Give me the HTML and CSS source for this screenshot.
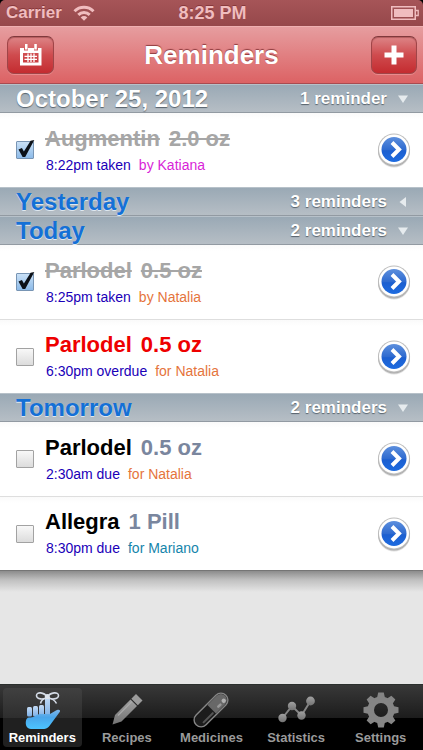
FILE: index.html
```html
<!DOCTYPE html>
<html lang="en">
<head>
<meta charset="utf-8">
<meta name="viewport" content="width=device-width, initial-scale=1">
<title>Reminders</title>
<link rel="stylesheet" href="styles.css">
</head>
<body>
<svg class="defs" aria-hidden="true">
  <defs>
    <linearGradient id="blue" x1="0" y1="0" x2="0" y2="1">
      <stop offset="0" stop-color="#5d8fdd"/><stop offset=".5" stop-color="#2f6bd0"/><stop offset=".55" stop-color="#1c5fd0"/><stop offset="1" stop-color="#1d6be0"/>
    </linearGradient>
    <linearGradient id="grey" x1="0" y1="0" x2="0" y2="1">
      <stop offset="0" stop-color="#a0a0a0"/><stop offset="1" stop-color="#737373"/>
    </linearGradient>
    <linearGradient id="palm" x1="0" y1="0" x2="0" y2="1">
      <stop offset="0" stop-color="#7fb5e8"/><stop offset=".4" stop-color="#4aa6ea"/><stop offset="1" stop-color="#4cc4ff"/>
    </linearGradient>
    <linearGradient id="finger" x1="0" y1="0" x2="0" y2="1">
      <stop offset="0" stop-color="#c3daf4"/><stop offset="1" stop-color="#7db0e6"/>
    </linearGradient>
  </defs>
  <symbol id="check" viewBox="0 0 20 20">
    <path d="M2.500 10.500l3.400-1.600 2 3.600L14.600 1.800 18.300 1 9.200 18 6.600 18z" fill="#0c1118"/>
  </symbol>
  <symbol id="disclose" viewBox="0 0 36 38">
    <ellipse cx="18" cy="20.500" rx="16" ry="16" fill="#000" opacity=".13"/>
    <circle cx="18" cy="19.500" r="16" fill="#000" opacity=".22"/>
    <circle cx="18" cy="18.500" r="16" fill="#bdbdbd"/>
    <circle cx="18" cy="18.500" r="15" fill="#fff"/>
    <circle cx="18" cy="18.500" r="12.500" fill="url(#blue)"/>
    <path d="M16 11.500l7 7-7 7" fill="none" stroke="#fff" stroke-width="4"/>
  </symbol>
</svg>

<header class="top">
  <div class="status">
    <div class="carrier">
      <span>Carrier</span>
      <svg width="22" height="16" viewBox="0 0 22 16" fill="none" stroke="#f0bdbf" stroke-width="3">
        <path d="M1.500 6.200a13.500 13.500 0 0 1 19 0"/>
        <path d="M5.300 9.900a8.200 8.200 0 0 1 11.400 0"/>
        <path d="M11 15.800L7.700 12.400a4.700 4.700 0 0 1 6.600 0z" fill="#f0bdbf" stroke="none"/>
      </svg>
    </div>
    <time>8:25 PM</time>
    <svg class="battery" width="28" height="14" viewBox="0 0 28 14" fill="none" stroke="#f0bdbf">
      <rect x=".75" y=".75" width="23.500" height="12.500" stroke-width="1.500"/>
      <rect x="3" y="3" width="19" height="8" fill="#f0bdbf" stroke="none"/>
      <path d="M24.500 4.500h2.700v5h-2.700" stroke-width="1.300"/>
    </svg>
  </div>
  <nav class="navbar">
    <button class="nav-button" type="button" aria-label="Calendar">
      <svg width="22" height="22" viewBox="0 0 22 22" fill="#fff">
        <path fill-rule="evenodd" d="M0 4h4v2.500h4V4h6v2.500h4V4h3.500v17.500H0zM3 9v9.500h15.500V9z"/>
        <rect x="5" y="0" width="2.500" height="5.500"/><rect x="14.300" y="0" width="2.500" height="5.500"/>
        <path d="M8 9.500v8.500M11 9.500v8.500M14 9.500v8.500M4.500 12.300h12.500M4.500 15.400h12.500" stroke="#fff" stroke-width="1.300"/>
      </svg>
    </button>
    <h1>Reminders</h1>
    <button class="nav-button add" type="button" aria-label="Add reminder">
      <svg width="20" height="20" viewBox="0 0 20 20"><path d="M10 .5v19M.5 10h19" stroke="#fff" stroke-width="5"/></svg>
    </button>
  </nav>
</header>

<main>
  <section>
    <header class="group past">
      <h2>October 25, 2012</h2><span class="count">1 reminder</span>
      <svg class="arrow" viewBox="0 0 10 10"><path d="M0 1.500h10L5 9z"/></svg>
    </header>
    <ul>
      <li class="row">
        <span class="tick"><input type="checkbox" id="r1" checked><svg><use href="#check"/></svg></span>
        <label class="info" for="r1">
          <span class="name done"><span>Augmentin</span><span>2.0 oz</span></span>
          <span class="meta"><span>8:22pm taken</span><span class="katiana">by Katiana</span></span>
        </label>
        <button class="more" type="button" aria-label="Details"><svg><use href="#disclose"/></svg></button>
      </li>
    </ul>
  </section>
  <section>
    <header class="group">
      <h2>Yesterday</h2><span class="count">3 reminders</span>
      <svg class="arrow" viewBox="0 0 10 10"><path d="M8 0v10L1.500 5z"/></svg>
    </header>
  </section>
  <section>
    <header class="group">
      <h2>Today</h2><span class="count">2 reminders</span>
      <svg class="arrow" viewBox="0 0 10 10"><path d="M0 1.500h10L5 9z"/></svg>
    </header>
    <ul>
      <li class="row">
        <span class="tick"><input type="checkbox" id="r2" checked><svg><use href="#check"/></svg></span>
        <label class="info" for="r2">
          <span class="name done"><span>Parlodel</span><span>0.5 oz</span></span>
          <span class="meta"><span>8:25pm taken</span><span class="natalia">by Natalia</span></span>
        </label>
        <button class="more" type="button" aria-label="Details"><svg><use href="#disclose"/></svg></button>
      </li>
      <li class="row">
        <span class="tick"><input type="checkbox" id="r3"></span>
        <label class="info" for="r3">
          <span class="name overdue"><span>Parlodel</span><span>0.5 oz</span></span>
          <span class="meta"><span>6:30pm overdue</span><span class="natalia">for Natalia</span></span>
        </label>
        <button class="more" type="button" aria-label="Details"><svg><use href="#disclose"/></svg></button>
      </li>
    </ul>
  </section>
  <section>
    <header class="group">
      <h2>Tomorrow</h2><span class="count">2 reminders</span>
      <svg class="arrow" viewBox="0 0 10 10"><path d="M0 1.500h10L5 9z"/></svg>
    </header>
    <ul>
      <li class="row">
        <span class="tick"><input type="checkbox" id="r4"></span>
        <label class="info" for="r4">
          <span class="name"><span>Parlodel</span><span class="dose">0.5 oz</span></span>
          <span class="meta"><span>2:30am due</span><span class="natalia">for Natalia</span></span>
        </label>
        <button class="more" type="button" aria-label="Details"><svg><use href="#disclose"/></svg></button>
      </li>
      <li class="row">
        <span class="tick"><input type="checkbox" id="r5"></span>
        <label class="info" for="r5">
          <span class="name"><span>Allegra</span><span class="dose">1 Pill</span></span>
          <span class="meta"><span>8:30pm due</span><span class="mariano">for Mariano</span></span>
        </label>
        <button class="more" type="button" aria-label="Details"><svg><use href="#disclose"/></svg></button>
      </li>
    </ul>
  </section>
  <div class="list-end"></div>
</main>

<nav class="tabs">
  <a class="tab active" href="#reminders">
    <svg viewBox="0 0 40 40">
      <g fill="url(#finger)">
        <rect x="5" y="17" width="5" height="9.500" rx="1.500"/>
        <rect x="11" y="16" width="5" height="10.500" rx="1.500"/>
        <rect x="17" y="15" width="5" height="11.500" rx="1.500"/>
        <path d="M23 7h5v20h-5z"/>
      </g>
      <path d="M4 30.500c.5-2.500 2-3 4.500-3 4.500 0 5.500-3.500 10-3.500H28c3-1.500 5-3.200 7-4 2.500-1 3.800.5 2.700 2L28.500 34.500C26 38 24.500 39 21 39H9c-4 0-6-4-5-8.500z" fill="url(#palm)"/>
      <g fill="none" stroke="#d4dbe6" stroke-width="1.600">
        <path d="M25.300 7C22 2 14.500 1.500 14.500 5.500 14.500 9.500 22 10 25.300 7 28.500 10 36.500 9.500 36.500 5.500 36.500 1.500 28.500 2 25.300 7z"/>
        <path d="M25 8c-3.500.5-6 3-6.500 5.500M26 8c4 .5 7 2.500 8.500 5.500"/>
      </g>
      <ellipse cx="25.300" cy="6.500" rx="2.500" ry="2.500" fill="#dce3ec"/>
    </svg>
    <span>Reminders</span>
  </a>
  <a class="tab" href="#recipes">
    <svg viewBox="0 0 40 40">
      <path d="M5.500 34.500l2.500-9.500L23.500 9.500l6.500 6.500L14.500 31.500z" fill="url(#grey)"/>
      <path d="M24.300 8.700l4.700-4.700 6.500 6.500-4.700 4.700z" fill="#9c9c9c"/>
      <path d="M11 25.500l14-14" stroke="#a8a8a8" stroke-width="1.200"/>
    </svg>
    <span>Recipes</span>
  </a>
  <a class="tab" href="#medicines">
    <svg viewBox="0 0 40 40">
      <g transform="rotate(45 20 20)">
        <rect x="13" y="-1" width="14" height="42" rx="7" fill="#1c1c1c" stroke="#858585" stroke-width="1.400"/>
        <path d="M14 19V6a6 6 0 0 1 12 0v13z" fill="#686868"/>
        <path d="M23.500 21v13" stroke="#555" stroke-width="2" stroke-linecap="round"/>
        <circle cx="22.500" cy="4.500" r="2.200" fill="#b0b0b0"/>
        <path d="M22.800 9.500v3" stroke="#999" stroke-width="2.500" stroke-linecap="round"/>
      </g>
    </svg>
    <span>Medicines</span>
  </a>
  <a class="tab" href="#statistics">
    <svg viewBox="0 0 40 40">
      <path d="M6.500 28l9.500-12 9.500 9.500L34.500 11" fill="none" stroke="#858585" stroke-width="2"/>
      <g fill="url(#grey)"><circle cx="6.500" cy="28" r="4.200"/><circle cx="16" cy="16" r="4.200"/><circle cx="25.500" cy="25.500" r="4.200"/><circle cx="34.500" cy="11" r="4.400"/></g>
    </svg>
    <span>Statistics</span>
  </a>
  <a class="tab" href="#settings">
    <svg viewBox="0 0 40 40">
      <circle cx="20" cy="20" r="10.300" fill="none" stroke="#858585" stroke-width="6.600"/>
      <g fill="#858585">
        <path id="cog" d="M16 8l1.200-5.500h5.600L24 8zM16 32l1.200 5.500h5.600L24 32z"/>
        <use href="#cog" transform="rotate(45 20 20)"/>
        <use href="#cog" transform="rotate(90 20 20)"/>
        <use href="#cog" transform="rotate(135 20 20)"/>
      </g>
    </svg>
    <span>Settings</span>
  </a>
</nav>
</body>
</html>
```

FILE: styles.css
```css
* {
  box-sizing: border-box;
}

body {
  margin: 0;
  min-height: 100vh;
  display: flex;
  flex-direction: column;
  background: #000;
  color: #000;
  font-family: "Liberation Sans", Arial, sans-serif;
}

h1,
h2,
ul {
  margin: 0;
  padding: 0;
}

ul {
  list-style: none;
}

button {
  padding: 0;
  border: 0;
  background: none;
}

.defs {
  position: absolute;
  width: 0;
  height: 0;
}

/* Status bar and title bar */

.top {
  overflow: hidden;
  border-radius: 5px 5px 0 0;
}

.status {
  display: grid;
  grid-template-columns: 1fr auto 1fr;
  align-items: center;
  height: 26px;
  padding: 0 4px 0 6px;
  background: linear-gradient(#a65558, #96484b);
  color: #f0bdbf;
  font-size: 17px;
  font-weight: bold;
  line-height: 26px;
  text-shadow: 0 -1px 0 #87383b;
}

.status time {
  font-size: 18px;
}

.carrier {
  display: flex;
  align-items: center;
  gap: 11px;
}

.battery {
  justify-self: end;
}

.navbar {
  display: flex;
  align-items: center;
  justify-content: space-between;
  height: 58px;
  padding: 0 7px;
  border-top: 1px solid #efb0b1;
  border-bottom: 1px solid #a94b50;
  background: linear-gradient(#e69d9f, #dc6264);
}

.navbar h1 {
  color: #fff;
  font-size: 26px;
  line-height: 32px;
  text-shadow: 0 -1px 1px #8f3c3f;
}

.nav-button {
  display: flex;
  align-items: center;
  justify-content: center;
  width: 47px;
  height: 38px;
  border: 1px solid #a04548;
  border-top-color: #7f393c;
  border-radius: 7px;
  background: linear-gradient(#dd8587, #cf4b4e 50%, #c42c30);
  box-shadow: 0 1px 0 #e98b8d, inset 0 1px 1px #b45b5e;
}

.navbar {
  padding-right: 6px;
}

.navbar h1 {
  flex: 1;
  text-align: center;
  padding-right: 2px;
}

.add {
  width: 46px;
}

/* Reminder list */

main {
  flex: 1;
  background: #e6e6e6;
}

section {
  background: #fff;
}

.list-end {
  height: 22px;
  border-top: 1px solid #757575;
  background: linear-gradient(#8c8c8c, #c0c0c0 9px, #e6e6e6);
}

.group {
  display: flex;
  align-items: center;
  height: 29px;
  padding: 0 15px 0 16px;
  border-top: 1px solid #b7c1c9;
  border-bottom: 1px solid #929aa2;
  background: linear-gradient(#9aa9b5, #b6bec5);
}

.group h2 {
  flex: 1;
  color: #1470d6;
  font-size: 24px;
  line-height: 27px;
  text-shadow: 0 1px 0 #dfe8f0;
}

.past h2 {
  color: #fff;
  text-shadow: 0 1px 1px #56616b;
}

.count {
  color: #fff;
  font-size: 17px;
  font-weight: bold;
  line-height: 27px;
  text-shadow: 0 1px 1px #56616b;
}

.arrow {
  width: 10px;
  height: 10px;
  margin-left: 11px;
  fill: #e6ebee;
}

.row {
  display: flex;
  align-items: center;
  height: 74px;
  padding: 0 11px 0 16px;
  background: linear-gradient(#fafafa, #fff 6px);
}

.row + .row {
  border-top: 1px solid #dedede;
}

.tick {
  position: relative;
  display: flex;
  width: 29px;
}

.tick input {
  appearance: none;
  width: 18px;
  height: 18px;
  margin: 0;
  border: 1px solid #a2a2a2;
  border-radius: 1px;
  background: linear-gradient(#f8f8f8, #dcdcdc);
}

.tick input:checked {
  border-color: #7895b4;
  background: linear-gradient(#c9e0f6, #8dbbe9);
}

.tick svg {
  position: absolute;
  left: 0;
  top: -2px;
  width: 20px;
  height: 20px;
  pointer-events: none;
}

.info {
  flex: 1;
  display: flex;
  flex-direction: column;
  gap: 5px;
  padding-bottom: 2px;
}

.name,
.meta {
  display: flex;
}

.name {
  gap: 9px;
  font-size: 22px;
  font-weight: bold;
  line-height: 26px;
}

.meta {
  gap: 8px;
  padding-left: 1px;
  color: #1a00b8;
  font-size: 14px;
  line-height: 16px;
}

.done {
  color: #a6a6a6;
}

.done span {
  text-decoration: line-through;
}

.overdue {
  color: #ee0000;
}

.dose {
  color: #7a869e;
}

.katiana {
  color: #d81fd8;
}

.natalia {
  color: #e5743c;
}

.mariano {
  color: #1585ab;
}

.more,
.more svg {
  display: block;
  width: 36px;
  height: 38px;
}

/* Tab bar */

.tabs {
  display: grid;
  grid-template-columns: repeat(5, 1fr);
  height: 66px;
  padding: 3px 0;
  border-top: 1px solid #2b2f2d;
  background: linear-gradient(#383838, #1c1c1c 33px, #000 33px);
}

.tab {
  display: flex;
  flex-direction: column;
  align-items: center;
  margin: 0 3px;
  padding-top: 2px;
  border-radius: 4px;
  color: #9a9a9a;
  font-size: 13px;
  font-weight: bold;
  line-height: 16px;
  text-decoration: none;
}

.tab svg {
  flex: none;
  width: 40px;
  height: 40px;
}

.active {
  background: linear-gradient(#404040, #2e2e2e 30px, #202020 30px);
  color: #fff;
}
```
